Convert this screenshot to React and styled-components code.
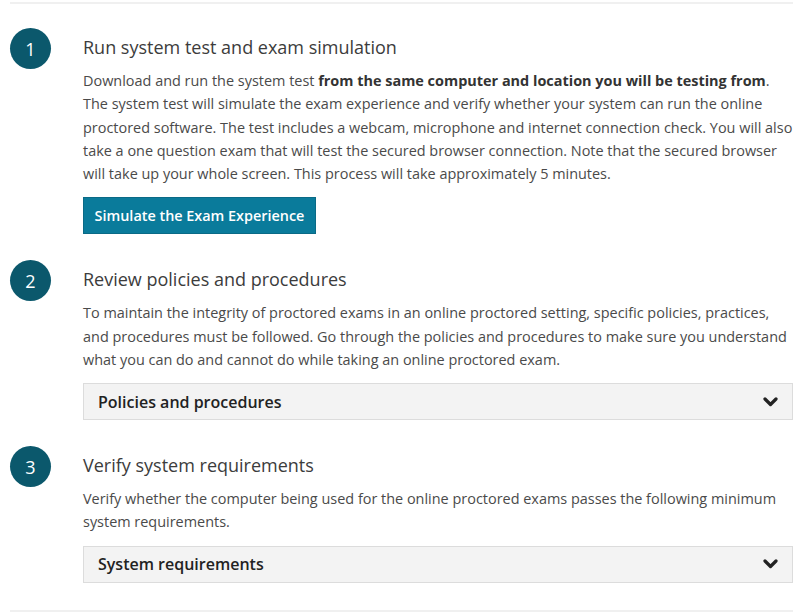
import React from "react";
import styled, { createGlobalStyle } from "styled-components";

const Global = createGlobalStyle`
  html, body { margin: 0; padding: 0; background: #fff; }
  body { font-family: "Open Sans", "Noto Sans", sans-serif; color: #444; }
`;

const Page = styled.div`
  width: 810px;
  padding: 2px 17px 0 10px;
  box-sizing: border-box;
`;

const Rule = styled.div`
  height: 2px;
  background: #f0f0f0;
`;

const Steps = styled.div`
  display: flex;
  flex-direction: column;
  gap: 26px;
  padding: 24px 0 27px;
`;

const Step = styled.section`
  display: flex;
  align-items: flex-start;
  gap: 32px;
`;

const Badge = styled.div`
  flex: none;
  width: 41px;
  height: 41px;
  border-radius: 50%;
  background: #0b586c;
  color: #fff;
  font-size: 18px;
  display: flex;
  align-items: center;
  justify-content: center;
`;

const Content = styled.div`
  flex: 1;
  padding-top: 6px;
  min-width: 0;
`;

const Title = styled.h2`
  margin: 0 0 9px;
  font-size: 18px;
  font-weight: 400;
  line-height: 26px;
  color: #3c3c3c;
`;

const Text = styled.p`
  margin: 0 -4px 12px 0;
  font-size: 14.45px;
  line-height: 23.25px;
  color: #4a4a4a;
  b { font-weight: 700; color: #333; }
`;

const Button = styled.button`
  display: block;
  box-sizing: border-box;
  height: 37px;
  width: 233px;
  padding: 0;
  background: #0a7b9b;
  border: 1px solid #0a6a86;
  color: #fff;
  font-family: inherit;
  font-size: 14.4px;
  font-weight: 600;
  cursor: pointer;
`;

const Accordion = styled.button`
  display: flex;
  align-items: center;
  justify-content: space-between;
  width: 100%;
  height: 37px;
  padding: 0 14px;
  box-sizing: border-box;
  background: #f3f3f3;
  border: 1px solid #dcdcdc;
  font-family: inherit;
  font-size: 16px;
  font-weight: 600;
  color: #222;
  text-align: left;
  cursor: pointer;
`;

const Chevron = () => (
  <svg width="15" height="10" viewBox="0 0 15 10">
    <path d="M2 2 L7.5 7.5 L13 2" fill="none" stroke="#222" strokeWidth="3.2" strokeLinecap="round" strokeLinejoin="round" />
  </svg>
);

export default function App() {
  return (
    <Page>
      <Global />
      <Rule />
      <Steps>
        <Step>
          <Badge>1</Badge>
          <Content>
            <Title>Run system test and exam simulation</Title>
            <Text>
              Download and run the system test <b>from the same computer and location you will be testing from</b>.
              The system test will simulate the exam experience and verify whether your system can run the online
              proctored software. The test includes a webcam, microphone and internet connection check. You will also
              take a one question exam that will test the secured browser connection. Note that the secured browser
              will take up your whole screen. This process will take approximately 5 minutes.
            </Text>
            <Button>Simulate the Exam Experience</Button>
          </Content>
        </Step>
        <Step>
          <Badge>2</Badge>
          <Content>
            <Title>Review policies and procedures</Title>
            <Text>
              To maintain the integrity of proctored exams in an online proctored setting, specific policies, practices,
              and procedures must be followed. Go through the policies and procedures to make sure you understand
              what you can do and cannot do while taking an online proctored exam.
            </Text>
            <Accordion>
              <span>Policies and procedures</span>
              <Chevron />
            </Accordion>
          </Content>
        </Step>
        <Step>
          <Badge>3</Badge>
          <Content>
            <Title>Verify system requirements</Title>
            <Text>
              Verify whether the computer being used for the online proctored exams passes the following minimum
              system requirements.
            </Text>
            <Accordion>
              <span>System requirements</span>
              <Chevron />
            </Accordion>
          </Content>
        </Step>
      </Steps>
      <Rule />
    </Page>
  );
}
